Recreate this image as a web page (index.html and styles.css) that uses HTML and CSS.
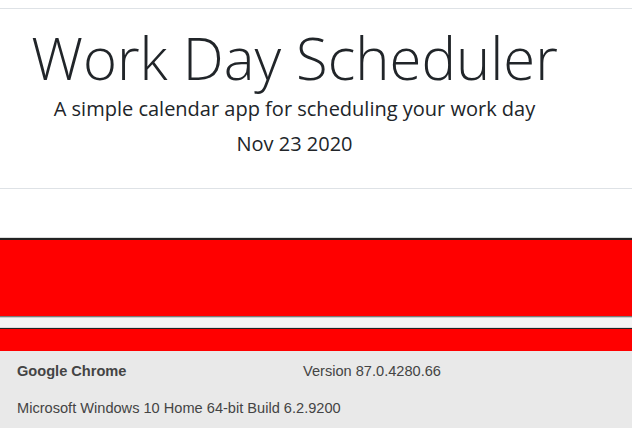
FILE: index.html
```html
<!DOCTYPE html>
<html>
<head>
<meta charset="utf-8">
<link rel="stylesheet" href="styles.css">
</head>
<body>
<header class="jumbotron">
  <h1 class="title">Work Day Scheduler</h1>
  <p class="lead">A simple calendar app for scheduling your work day</p>
  <p class="today">Nov 23 2020</p>
</header>
<main class="blocks">
  <div class="block block-first"></div>
  <div class="block block-second"></div>
</main>
<footer class="about">
  <div class="about-row">
    <span class="browser">Google Chrome</span>
    <span class="version">Version 87.0.4280.66</span>
  </div>
  <div class="about-row os">Microsoft Windows 10 Home 64-bit Build 6.2.9200</div>
</footer>
</body>
</html>
```
FILE: styles.css
```css
html, body {
  margin: 0;
  padding: 0;
  background: #fff;
  height: 100%;
  overflow: hidden;
}
body {
  font-family: "Open Sans", "Noto Sans", sans-serif;
  color: #212529;
  display: flex;
  flex-direction: column;
}
.jumbotron {
  margin-top: 8px;
  border-top: 1px solid #dee2e6;
  border-bottom: 1px solid #dee2e6;
  height: 179px;
  text-align: center;
  padding-right: 43px;
  box-sizing: content-box;
}
.title {
  margin: 13.5px 0 0;
  font-size: 58px;
  font-weight: 300;
  line-height: 70px;
}
.lead {
  margin: 1.5px 0 0;
  font-size: 20px;
  font-weight: 400;
  line-height: 30px;
}
.today {
  margin: 5px 0 0;
  font-size: 20px;
  font-weight: 400;
  line-height: 30px;
}
.blocks {
  margin-top: 48px;
  display: flex;
  flex-direction: column;
}
.block {
  background: #ff0000;
}
.block-first {
  border-top: 1px solid #dcdcdc;
  box-shadow: inset 0 2px 0 #222;
  height: 78px;
  border-bottom: 1px solid #7a7a7a;
}
.block-second {
  margin-top: 0;
  border-top: 10px solid #f4f4f4;
  height: 24px;
  box-shadow: inset 0 1px 0 #dddddd, inset 0 2px 0 #222;
}
.block-second::before {
  content: "";
  display: block;
  height: 1px;
  background: #cccccc;
  margin-top: -10px;
}
.about {
  flex: 1;
  background: #e9e9e9;
  font-family: "Liberation Sans", Arial, sans-serif;
  font-size: 14.6px;
  color: #444;
  padding: 12px 17px 0;
}
.about-row {
  display: flex;
  line-height: 16px;
}
.browser {
  font-weight: bold;
  width: 286px;
}
.os {
  margin-top: 21px;
}
```
